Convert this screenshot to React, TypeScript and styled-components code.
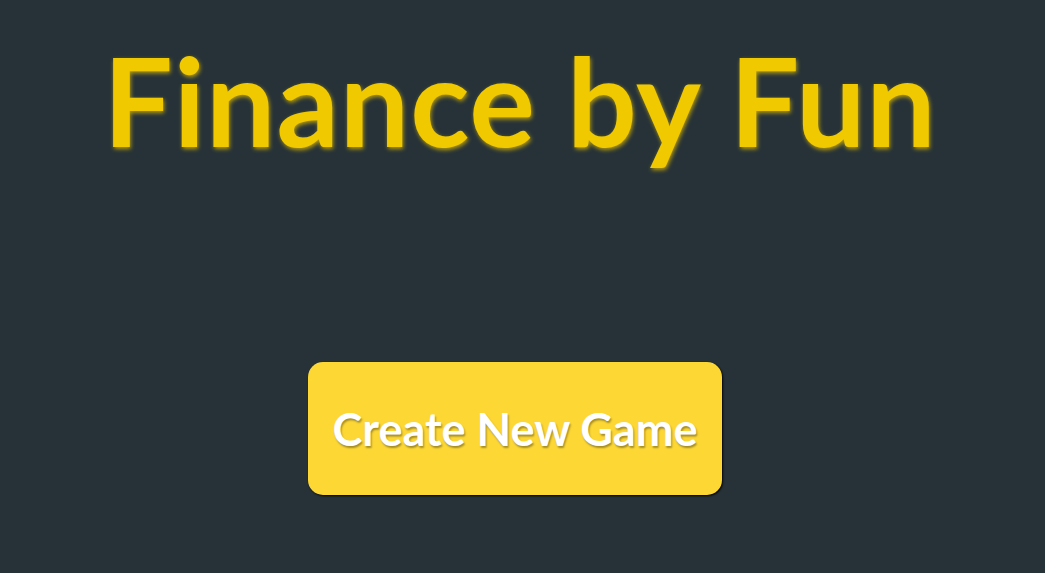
import React from "react";
import styled, { createGlobalStyle } from "styled-components";

const Global = createGlobalStyle`
  html, body { margin: 0; padding: 0; background: #263238; }
  body { font-family: Lato, "Open Sans", sans-serif; }
`;

const Page = styled.main`
  width: 1045px;
  height: 573px;
  background: #263238;
  display: flex;
  flex-direction: column;
  align-items: center;
`;

const Title = styled.h1`
  margin: 38px 5px 0 0;
  font-family: Lato, sans-serif;
  font-weight: 700;
  font-size: 123px;
  line-height: 1;
  letter-spacing: 1px;
  color: #f0c900;
  text-shadow: 1px 2px 4px rgba(241, 201, 0, 0.7);
`;

const Button = styled.button`
  margin: 201px 15px 0 0;
  width: 414px;
  height: 133px;
  border: none;
  border-radius: 15px;
  background: #fdd835;
  color: #ffffff;
  font-family: Lato, sans-serif;
  font-weight: 700;
  font-size: 45px;
  text-shadow: 1px 2px 2px rgba(0, 0, 0, 0.35);
  box-shadow: 1px 1px 2px rgba(0, 0, 0, 0.9);
  cursor: pointer;
`;

export default function App() {
  return (
    <>
      <Global />
      <Page>
        <Title>Finance by Fun</Title>
        <Button>Create New Game</Button>
      </Page>
    </>
  );
}
